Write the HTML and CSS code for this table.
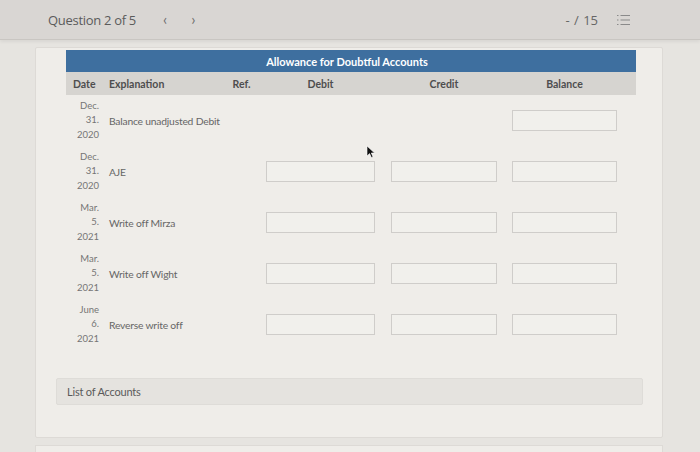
FILE: index.html
```html
<!DOCTYPE html>
<html>
<head>
<meta charset="utf-8">
<link rel="stylesheet" href="styles.css">
</head>
<body>
<div class="topbar">
  <div class="qtitle">Question 2 of 5</div>
  <div class="nav"><span class="arrow">&lsaquo;</span><span class="arrow">&rsaquo;</span></div>
  <div class="spacer"></div>
  <div class="score">- / 15</div>
  <svg class="listicon" width="15" height="12" viewBox="0 0 15 12">
    <g fill="none" stroke="#8a8a8a" stroke-width="1.2">
      <path d="M1 1.5h1.5M1 6h1.5M1 10.5h1.5"/>
      <path d="M4.5 1.5h9.5M4.5 6h9.5M4.5 10.5h9.5"/>
    </g>
  </svg>
</div>
<div class="main">
  <div class="card">
    <div class="ledger">
      <div class="ltitle">Allowance for Doubtful Accounts</div>
      <div class="grid head">
        <div class="h-date">Date</div>
        <div class="h-exp">Explanation</div>
        <div class="h-ref">Ref.</div>
        <div class="h-amt w1">Debit</div>
        <div class="h-amt w2">Credit</div>
        <div class="h-amt w3">Balance</div>
      </div>

      <div class="grid row">
        <div class="date"><span>Dec.</span><span>31.</span><span>2020</span></div>
        <div class="exp">Balance unadjusted Debit</div>
        <div></div><div></div><div></div>
        <div class="cell"><div class="inp w3"></div></div>
      </div>

      <div class="grid row">
        <div class="date"><span>Dec.</span><span>31.</span><span>2020</span></div>
        <div class="exp">AJE</div>
        <div></div>
        <div class="cell"><div class="inp w1"></div></div>
        <div class="cell"><div class="inp w2"></div></div>
        <div class="cell"><div class="inp w3"></div></div>
      </div>

      <div class="grid row">
        <div class="date"><span>Mar.</span><span>5.</span><span>2021</span></div>
        <div class="exp">Write off Mirza</div>
        <div></div>
        <div class="cell"><div class="inp w1"></div></div>
        <div class="cell"><div class="inp w2"></div></div>
        <div class="cell"><div class="inp w3"></div></div>
      </div>

      <div class="grid row">
        <div class="date"><span>Mar.</span><span>5.</span><span>2021</span></div>
        <div class="exp">Write off Wight</div>
        <div></div>
        <div class="cell"><div class="inp w1"></div></div>
        <div class="cell"><div class="inp w2"></div></div>
        <div class="cell"><div class="inp w3"></div></div>
      </div>

      <div class="grid row">
        <div class="date"><span>June</span><span>6.</span><span>2021</span></div>
        <div class="exp">Reverse write off</div>
        <div></div>
        <div class="cell"><div class="inp w1"></div></div>
        <div class="cell"><div class="inp w2"></div></div>
        <div class="cell"><div class="inp w3"></div></div>
      </div>
    </div>
    <div class="accounts">List of Accounts</div>
    <svg class="cursor" width="10" height="14" viewBox="0 0 10 14">
      <path d="M1 1 L1 11 L3.6 8.6 L5.4 12.6 L7 11.9 L5.3 8 L8.6 8 Z" fill="#111" stroke="#fff" stroke-width="0.6"/>
    </svg>
  </div>
  <div class="nextcard"></div>
</div>
</body>
</html>
```

FILE: styles.css
```css
* { box-sizing: border-box; }
html, body {
  margin: 0;
  padding: 0;
  width: 700px;
  height: 452px;
  overflow: hidden;
  background: #e6e4e0;
  font-family: Lato, "Open Sans", sans-serif;
}
.topbar {
  height: 40px;
  background: #d9d6d3;
  border-bottom: 1px solid #c9c6c2;
  box-shadow: 0 2px 3px rgba(0,0,0,0.06);
  display: flex;
  align-items: center;
  padding: 0 69px 0 48px;
  color: #5a5a5a;
}
.qtitle {
  font-family: "Open Sans", sans-serif;
  font-size: 13px;
  letter-spacing: -0.3px;
  color: #5b5b5b;
}
.nav {
  display: flex;
  gap: 24px;
  margin-left: 27px;
}
.arrow {
  font-size: 15px;
  color: #6c6c6c;
  line-height: 1;
}
.spacer { flex: 1; }
.score {
  font-family: "Open Sans", sans-serif;
  font-size: 13px;
  color: #666;
  margin-right: 18px;
  word-spacing: 1px;
}
.listicon { display: block; }
.main {
  padding: 7px 37px 0 35px;
}
.card {
  position: relative;
  background: #efede9;
  border: 1px solid #dddad6;
  border-radius: 2px;
  padding: 2px 25px 0 30px;
  height: 391px;
}
.ledger {
  width: 570px;
}
.ltitle {
  height: 22px;
  background: #3e6f9f;
  color: #fff;
  font-weight: 700;
  font-size: 11px;
  display: flex;
  align-items: center;
  justify-content: center;
  padding-right: 8px;
}
.grid {
  display: grid;
  grid-template-columns: 43px 114px 43px 125px 121px 124px;
}
.head {
  height: 23px;
  background: #d6d4d0;
  align-items: center;
  font-weight: 700;
  font-size: 10.5px;
  color: #4e4e4e;
}
.h-date { padding-left: 7px; }
.h-ref { text-align: center; padding-right: 6px; }
.h-amt { text-align: center; }
.w1 { width: 109px; }
.w2 { width: 106px; }
.w3 { width: 105px; }
.row {
  height: 51px;
  align-items: center;
  font-size: 10px;
  color: #6a6a6a;
}
.date {
  display: flex;
  flex-direction: column;
  align-items: flex-end;
  padding-right: 10px;
  line-height: 14.5px;
  color: #757575;
  font-size: 9.5px;
}
.exp {
  color: #666;
  font-size: 10.3px;
  letter-spacing: -0.2px;
}
.cell { display: flex; }
.inp {
  height: 21px;
  border: 1px solid #cfcdca;
  background: #f1f0ec;
}
.accounts {
  margin: 28px -6px 0 -10px;
  height: 27px;
  background: #e5e3df;
  border: 1px solid #dedcd8;
  border-radius: 2px;
  display: flex;
  align-items: center;
  padding-left: 10px;
  font-size: 11px;
  color: #5a5a5a;
  letter-spacing: -0.2px;
}
.cursor {
  position: absolute;
  left: 330px;
  top: 97px;
}
.nextcard {
  margin-top: 7px;
  height: 20px;
  background: #efede9;
  border: 1px solid #dddad6;
}
```
